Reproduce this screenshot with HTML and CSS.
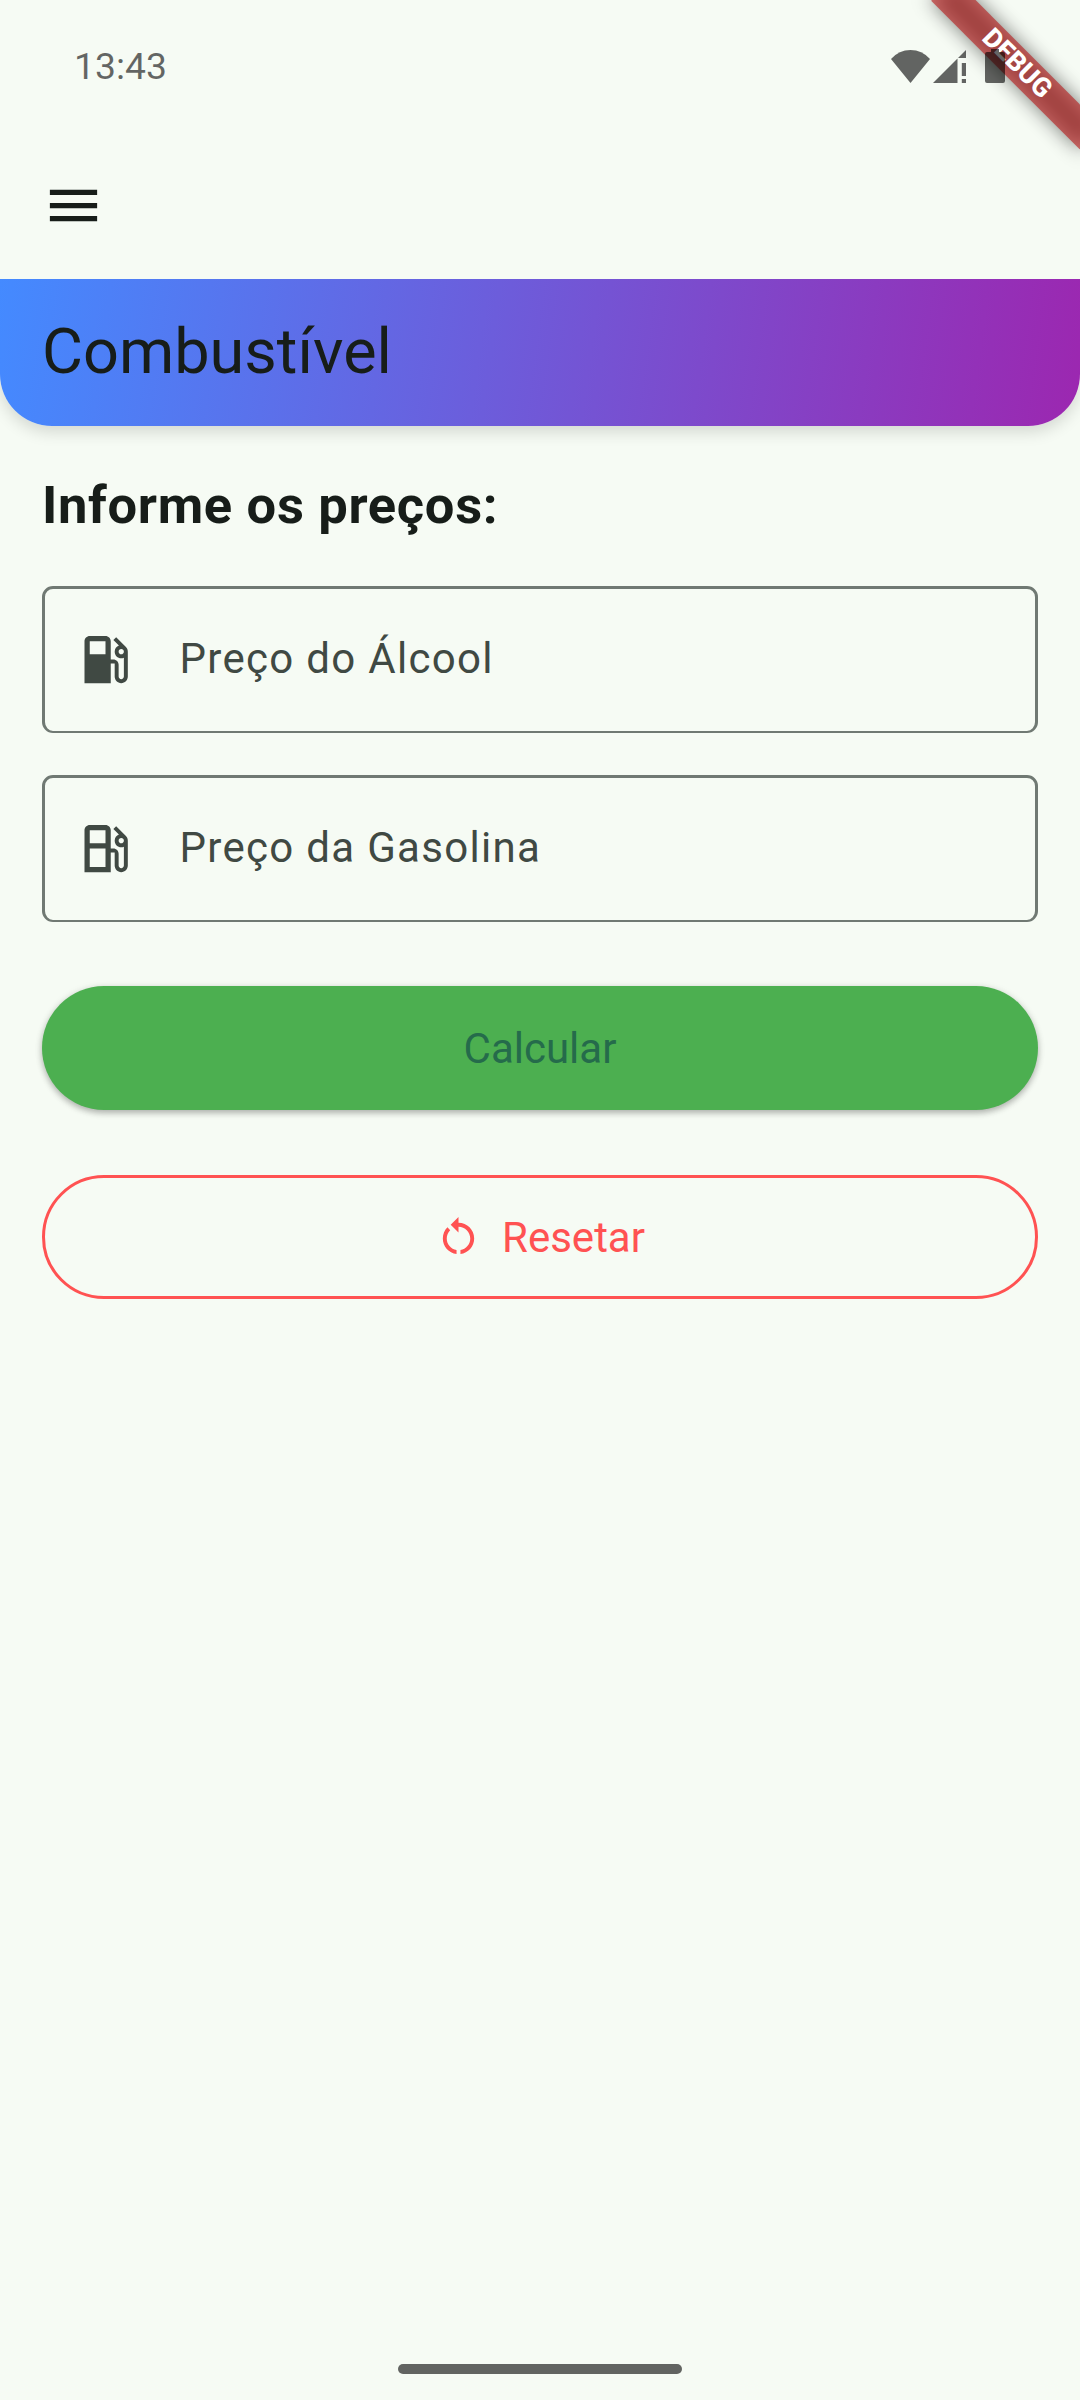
FILE: index.html
```html
<!DOCTYPE html>
<html lang="pt-BR">
<head>
<meta charset="utf-8">
<title>Combustível</title>
<link rel="stylesheet" href="styles.css">
</head>
<body>
<div class="debug-banner" aria-hidden="true">
  <div class="ribbon-shadow"></div>
  <div class="ribbon">DEBUG</div>
</div>
<div class="screen">
  <div class="status-bar">
    <span class="clock">13:43</span>
    <div class="status-icons">
      <svg class="wifi" viewBox="0 0 39 33"><path d="M19.500 33L0 9Q8 0 19.500 0T39 9Z"/></svg>
      <svg class="signal" viewBox="0 0 33 33"><path d="M0 33L24.500 8.500V33ZM33 0V8H25ZM28.800 13H33V26H28.800ZM28.800 29H33V33H28.800Z"/></svg>
      <svg class="battery" viewBox="0 0 20 34"><path d="M6 0H14V3H18Q20 3 20 5V32Q20 34 18 34H2Q0 34 0 32V5Q0 3 2 3H6Z"/></svg>
    </div>
  </div>
  <nav class="toolbar">
    <svg class="icon" viewBox="0 0 24 24"><path d="M3 18h18v-2H3v2zm0-5h18v-2H3v2zm0-7v2h18V6H3z"/></svg>
  </nav>
  <header class="header"><h1 class="title">Combustível</h1></header>
  <main class="content">
    <h2 class="subtitle">Informe os preços:</h2>
    <div class="field">
      <svg class="icon" viewBox="0 0 24 24"><path d="M19.770 7.230l.01-.01-3.720-3.720L15 4.560l2.110 2.110c-.94.360-1.610 1.260-1.610 2.330 0 1.380 1.120 2.500 2.500 2.500.360 0 .690-.080 1-.210v7.210c0 .550-.450 1-1 1s-1-.450-1-1V14c0-1.100-.900-2-2-2h-1V5c0-1.100-.900-2-2-2H6c-1.100 0-2 .900-2 2v16h10v-7.500h1.500v5c0 1.380 1.120 2.500 2.500 2.500s2.500-1.120 2.500-2.500V9c0-.690-.280-1.320-.730-1.770zM12 10H6V5h6v5zm6 0c-.550 0-1-.450-1-1s.450-1 1-1 1 .450 1 1-.450 1-1 1z"/></svg>
      <span class="label">Preço do Álcool</span>
    </div>
    <div class="field">
      <svg class="icon" viewBox="0 0 24 24"><path d="M19.770 7.230l.01-.01-3.720-3.720L15 4.560l2.110 2.110c-.94.360-1.610 1.260-1.610 2.330 0 1.380 1.120 2.500 2.500 2.500.360 0 .690-.080 1-.210v7.210c0 .550-.450 1-1 1s-1-.450-1-1V14c0-1.100-.900-2-2-2h-1V5c0-1.100-.900-2-2-2H6c-1.100 0-2 .900-2 2v16h10v-7.500h1.500v5c0 1.380 1.120 2.500 2.500 2.500s2.500-1.120 2.500-2.500V9c0-.690-.280-1.320-.730-1.770zM12 19H6v-7h6v7zm0-9H6V5h6v5zm6 0c-.550 0-1-.450-1-1s.450-1 1-1 1 .450 1 1-.450 1-1 1z"/></svg>
      <span class="label">Preço da Gasolina</span>
    </div>
    <button class="button calculate">Calcular</button>
    <button class="button reset">
      <svg class="small-icon" viewBox="0 0 24 24"><path d="M12 5V2L8 6l4 4V7c3.310 0 6 2.690 6 6 0 2.970-2.170 5.430-5 5.910v2.020c3.950-.490 7-3.850 7-7.930 0-4.420-3.580-8-8-8zM6 13c0-1.650.670-3.150 1.760-4.240L6.340 7.340C4.900 8.790 4 10.790 4 13c0 4.080 3.050 7.440 7 7.930v-2.020c-2.830-.480-5-2.940-5-5.910z"/></svg>
      <span>Resetar</span>
    </button>
  </main>
  <div class="home-indicator"></div>
</div>
</body>
</html>
```
FILE: styles.css
```css
* { box-sizing: border-box; }

body {
  margin: 0;
  background: #f6fbf4;
  color: #171d19;
  font-family: Roboto, sans-serif;
}

svg { display: block; flex: none; fill: currentColor; }

.screen {
  position: relative;
  display: flex;
  flex-direction: column;
  width: 1080px;
  height: 2400px;
  padding-bottom: 26px;
}

.status-bar {
  display: flex;
  align-items: center;
  justify-content: space-between;
  height: 132px;
  padding: 0 75px 0 74px;
  color: rgba(0, 0, 0, 0.6);
}

.clock { font-size: 37.3px; line-height: 45px; }

.status-icons { display: flex; align-items: center; }
.wifi { width: 39px; height: 33px; }
.signal { width: 33px; height: 33px; margin-left: 3px; }
.battery { width: 20px; height: 34px; margin-left: 19px; }

.toolbar {
  display: flex;
  align-items: center;
  height: 147px;
  padding-left: 42px;
}

.icon { width: 63px; height: 63px; }

.header {
  display: flex;
  align-items: center;
  height: 147px;
  padding: 0 42px 2px;
  border-radius: 0 0 52px 52px;
  background: linear-gradient(97.75deg, #448aff, #9c27b0);
  box-shadow: 0 6px 16px rgba(0, 0, 0, 0.14);
  clip-path: inset(0 0 -40px 0);
}

.title {
  margin: 0;
  font-size: 63px;
  font-weight: 400;
  line-height: 80px;
}

.content {
  display: flex;
  flex-direction: column;
  padding: 42px 42px 0;
}

.subtitle {
  height: 76px;
  margin: 0 0 42px;
  font-size: 52.5px;
  font-weight: 700;
  line-height: 74px;
  letter-spacing: 0.66px;
}

.field {
  display: flex;
  align-items: center;
  height: 147px;
  margin-bottom: 42px;
  padding: 0 0 2px 28.5px;
  border: solid #707973;
  border-width: 3px 3px 2px;
  border-radius: 11px;
  color: #404943;
}

.label {
  margin-left: 43px;
  padding-bottom: 1px;
  font-size: 42px;
  line-height: 63px;
  letter-spacing: 1.31px;
}

.button {
  display: flex;
  align-items: center;
  justify-content: center;
  height: 124px;
  padding: 0;
  border: 0;
  border-radius: 62px;
  font: 400 42px/60px Roboto, sans-serif;
}

.calculate {
  margin: 22px 0 65px;
  padding-top: 2px;
  background: #4caf50;
  color: #256b4b;
  box-shadow: 0 3px 6px rgba(0, 0, 0, 0.26), 0 1px 8px rgba(0, 0, 0, 0.08);
}

.reset {
  gap: 20px;
  padding-top: 2px;
  border: 3px solid #ff5252;
  background: transparent;
  color: #ff5252;
}

.small-icon { width: 47px; height: 47px; margin-bottom: 3px; }

.home-indicator {
  align-self: center;
  width: 284px;
  height: 10px;
  margin-top: auto;
  border-radius: 5px;
  background: #626461;
}

/* The corner ribbon lies under the status icons. */
.debug-banner {
  position: absolute;
  top: 0;
  left: 780px;
  width: 300px;
  height: 300px;
  overflow: hidden;
}

.ribbon,
.ribbon-shadow {
  position: absolute;
  top: 73.5px;
  left: 195px;
  width: 210px;
  height: 31.5px;
  transform: rotate(45deg);
  transform-origin: 105px -73.5px;
}

.ribbon-shadow {
  background: rgba(0, 0, 0, 0.5);
  filter: blur(9.5px);
}

.ribbon {
  background: rgba(183, 28, 28, 0.627);
  color: #fff;
  font-size: 26.8px;
  font-weight: 800;
  line-height: 31px;
  text-align: center;
}
```
